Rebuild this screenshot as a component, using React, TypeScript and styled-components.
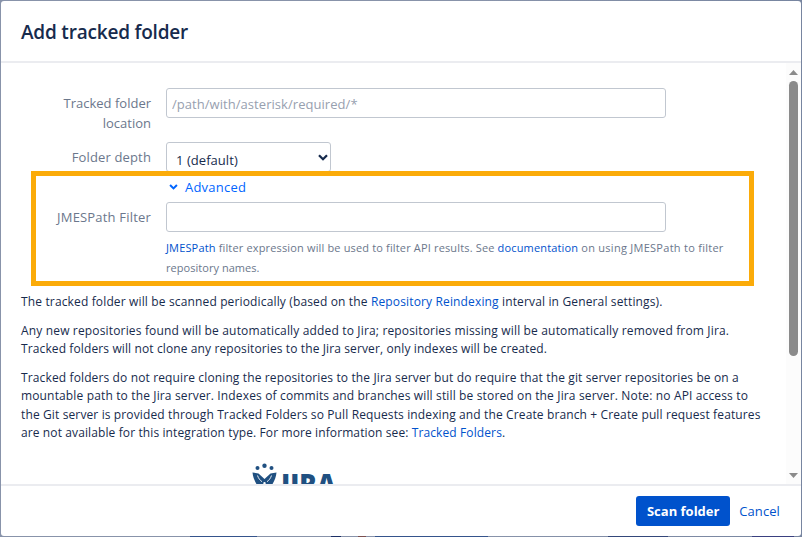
import React from "react";
import styled, { createGlobalStyle } from "styled-components";

const Global = createGlobalStyle`
  * { box-sizing: border-box; }
  body { margin: 0; overflow: hidden; background: #8490a8; }
`;

const Backdrop = styled.div`
  width: 802px;
  height: 537px;
  padding: 1px;
  background:
    linear-gradient(90deg,
      transparent 190px, #35548c 190px 257px, transparent 257px 331px,
      #1c2f66 331px 341px, transparent 341px 358px, #7b5050 358px 366px,
      transparent 366px 375px, #35548c 375px 488px, transparent 488px 608px,
      #34477a 608px 668px, transparent 668px 752px, #3a4080 752px 794px, transparent 794px)
      0 100% / 100% 1px no-repeat,
    linear-gradient(90deg, #8893aa 0%, #8893aa 60%, #7785a0 100%);
  font-family: "Open Sans", "Noto Sans", sans-serif;
  color: #172b4d;
`;

const Dialog = styled.section`
  display: flex;
  flex-direction: column;
  width: 800px;
  height: 535px;
  background: #fff;
  border-radius: 3px;
  overflow: hidden;
`;

const Header = styled.header`
  flex: none;
  height: 62px;
  padding: 0 20px;
  border-bottom: 2px solid #ebecf0;
`;

const Title = styled.h2`
  margin: 0;
  font-size: 19px;
  font-weight: 600;
  line-height: 63px;
  letter-spacing: -0.2px;
`;

const Body = styled.div`
  display: flex;
  flex: 1;
  min-height: 0;
`;

const Content = styled.div`
  position: relative;
  flex: 1;
  min-width: 0;
  padding: 25px 0 0 20px;
  overflow: hidden;
`;

const Row = styled.div<{ $h: number }>`
  display: flex;
  height: ${(p) => p.$h}px;
`;

const Label = styled.label<{ $ls?: number }>`
  width: 130px;
  margin-right: 15px;
  padding-top: 5px;
  font-size: 13px;
  line-height: 20px;
  text-align: right;
  letter-spacing: ${(p) => p.$ls ?? 0}px;
  color: #6b778c;
`;

const Input = styled.input`
  width: 500px;
  height: 30px;
  padding: 2px 4px 0 5px;
  border: 1px solid #c1c7d0;
  border-radius: 3px;
  outline: none;
  font: 13px "Open Sans", sans-serif;
  letter-spacing: 0.05px;
  color: #172b4d;
  &::placeholder { color: #97a0af; opacity: 1; }
`;

const Select = styled.div`
  display: flex;
  justify-content: space-between;
  width: 165px;
  height: 30px;
  padding: 3px 2px 0 9px;
  border: 1px solid #c1c7d0;
  border-radius: 3px;
  font-size: 13px;
  line-height: 28px;
  letter-spacing: 0.05px;
  svg { margin-top: 8px; }
`;

const Advanced = styled.a`
  display: flex;
  align-items: center;
  height: 20px;
  margin: 5px 0 5px 148px;
  gap: 7px;
  font-size: 13px;
  letter-spacing: 0.22px;
  color: #0065ff;
`;

const Help = styled.div`
  margin: 6px 0 0 145px;
  font-size: 11px;
  line-height: 20px;
  color: #6b778c;
`;

const Paragraph = styled.p`
  margin: 0 0 10.8px;
  font-size: 12px;
  line-height: 18.2px;
`;

const Line = styled.span<{ $ls: number }>`
  display: block;
  white-space: nowrap;
  letter-spacing: ${(p) => p.$ls}px;
`;

const Phrase = styled.span<{ $ls: number }>`
  letter-spacing: ${(p) => p.$ls}px;
`;

const Link = styled.a`
  color: #0052cc;
`;

const Notes = styled.div`
  margin-top: 15px;
`;

const Highlight = styled.div`
  position: absolute;
  left: 30px;
  top: 108px;
  width: 723px;
  height: 115px;
  border: 5px solid #fbab09;
  pointer-events: none;
`;

const Logo = styled.svg`
  display: block;
  margin: 8px 0 0 227px;
`;

const Scrollbar = styled.div`
  display: flex;
  flex-direction: column;
  align-items: center;
  width: 15px;
  padding: 7px 0 6px;
  background: #fcfcfc;
`;

const Thumb = styled.div`
  width: 9px;
  height: 275px;
  margin: 6px 0 auto;
  border-radius: 5px;
  background: #8b8b8b;
`;

const Footer = styled.footer`
  display: flex;
  flex: none;
  align-items: center;
  justify-content: flex-end;
  gap: 9px;
  height: 52px;
  padding: 0 21px 0 0;
  border-top: 2px solid #ebecf0;
`;

const Primary = styled.button`
  width: 94px;
  height: 30px;
  padding: 0;
  border: 0;
  border-radius: 3px;
  background: #0052cc;
  color: #fff;
  font: 700 13px "Open Sans", sans-serif;
`;

const Cancel = styled.a`
  font-size: 13px;
  letter-spacing: 0.1px;
  color: #0052cc;
`;

const Chevron = ({ w, h }: { w: number; h: number }) => (
  <svg width={w} height={h} viewBox="0 0 10 7" fill="none" stroke="currentColor" strokeWidth="2.3">
    <path d="M1 1.2 5 5.2 9 1.2" />
  </svg>
);

export default function App() {
  return (
    <Backdrop>
      <Global />
      <Dialog>
        <Header>
          <Title>Add tracked folder</Title>
        </Header>
        <Body>
          <Content>
            <Row $h={54}>
              <Label>Tracked folder location</Label>
              <Input placeholder="/path/with/asterisk/required/*" />
            </Row>
            <Row $h={30}>
              <Label $ls={0.14}>Folder depth</Label>
              <Select>
                1 (default)
                <Chevron w={10} h={7} />
              </Select>
            </Row>
            <Advanced>
              <Chevron w={9} h={6} />
              Advanced
            </Advanced>
            <Row $h={30}>
              <Label $ls={0.19}>JMESPath Filter</Label>
              <Input />
            </Row>
            <Help>
              <Line $ls={0.155}>
                <Link>JMESPath</Link> filter expression will be used to filter API results. See{" "}
                <Link>documentation</Link>
                <Phrase $ls={0.27}> on using JMESPath to filter</Phrase>
              </Line>
              <Line $ls={0.04}>repository names.</Line>
            </Help>
            <Notes>
              <Paragraph>
                <Line $ls={0.145}>
                  The tracked folder will be scanned periodically (based on the{" "}
                  <Link>Repository Reindexing</Link> interval in General settings).
                </Line>
              </Paragraph>
              <Paragraph>
                <Line $ls={0.16}>
                  Any new repositories found will be automatically added to Jira; repositories missing will be
                  automatically removed from Jira.
                </Line>
                <Line $ls={0.115}>
                  Tracked folders will not clone any repositories to the Jira server, only indexes will be created.
                </Line>
              </Paragraph>
              <Paragraph>
                <Line $ls={0.13}>
                  Tracked folders do not require cloning the repositories to the Jira server but do require that the
                  git server repositories be on a
                </Line>
                <Line $ls={0.145}>
                  mountable path to the Jira server. Indexes of commits and branches will still be stored on the Jira
                  server. Note: no API access to
                </Line>
                <Line $ls={0.125}>
                  the Git server is provided through Tracked Folders so Pull Requests indexing and the Create branch +
                  Create pull request features
                </Line>
                <Line $ls={0.11}>
                  are not available for this integration type. For more information see:{" "}
                  <Link>Tracked Folders</Link>.
                </Line>
              </Paragraph>
            </Notes>
            <Logo width="90" height="38" viewBox="248 452 90 38" fill="#205081">
              <circle cx="257.5" cy="467" r="2" />
              <circle cx="264.5" cy="464.8" r="2.2" />
              <circle cx="271.5" cy="467" r="2" />
              <path d="M252.500 471.500 258.500 472.500 264.500 478 270.500 472.500 276.500 471.500C276 477 273.500 482 270 487H259C255.500 482 253 477 252.500 471.500z" />
              <path
                d="M257.500 474.500c1 3 2.500 4.800 4.500 6.200M271.500 474.500c-1 3-2.500 4.800-4.500 6.200"
                fill="none"
                stroke="#fff"
                strokeWidth="0.9"
              />
              <circle cx="264.5" cy="482.3" r="1.2" fill="#fff" />
              <text
                x="281"
                y="493"
                fontFamily="Open Sans"
                fontWeight="800"
                fontSize="29"
                textLength="55"
                lengthAdjust="spacingAndGlyphs"
              >
                JIRA
              </text>
            </Logo>
            <Highlight />
          </Content>
          <Scrollbar>
            <svg width="9" height="5" viewBox="0 0 9 5" fill="#8b8b8b">
              <path d="M0 5 4.500 0 9 5z" />
            </svg>
            <Thumb />
            <svg width="9" height="5" viewBox="0 0 9 5" fill="#8b8b8b">
              <path d="M0 0h9L4.500 5z" />
            </svg>
          </Scrollbar>
        </Body>
        <Footer>
          <Primary>Scan folder</Primary>
          <Cancel>Cancel</Cancel>
        </Footer>
      </Dialog>
    </Backdrop>
  );
}
